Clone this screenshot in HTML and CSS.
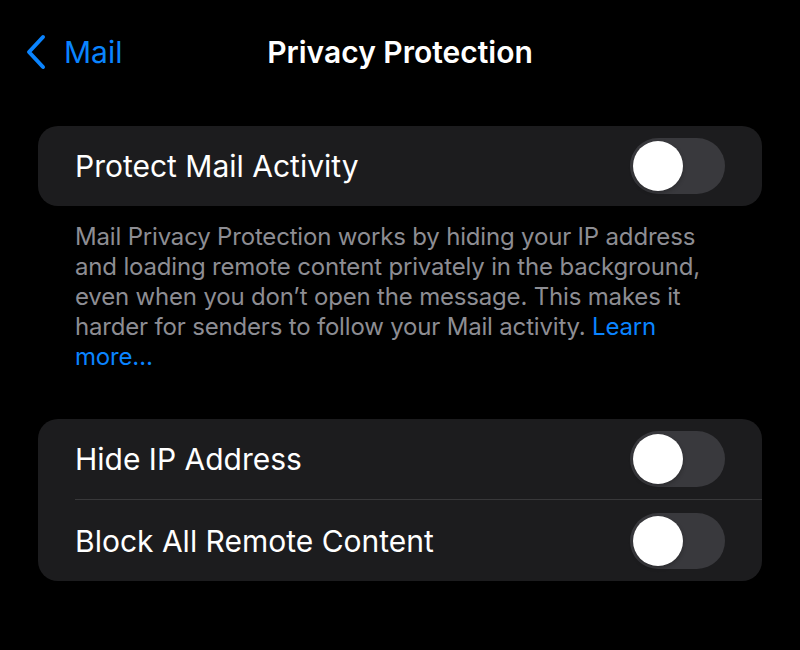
FILE: index.html
```html
<!DOCTYPE html>
<html lang="en">
<head>
	<meta charset="UTF-8">
	<meta name="viewport" content="width=device-width, initial-scale=1.0">
	<title>Privacy Protection</title>
	<link rel="stylesheet" href="styles.css">
</head>
<body>
	<div class="navbar">
		<a class="back" href="#">
			<svg class="chevron" width="22" height="36" viewBox="0 0 22 36">
				<path d="M18 3 L4 18 L18 33" fill="none" stroke="#0a84ff" stroke-width="4" stroke-linecap="round" stroke-linejoin="round"/>
			</svg>
			<span>Mail</span>
		</a>
		<div class="title">Privacy Protection</div>
	</div>

	<div class="group">
		<div class="row">
			<span class="label">Protect Mail Activity</span>
			<span class="toggle"><span class="knob"></span></span>
		</div>
	</div>
	<p class="footer">Mail Privacy Protection works by hiding your IP address and loading remote content privately in the background, even when you don’t open the message. This makes it harder for senders to follow your Mail activity. <a href="#">Learn more…</a></p>

	<div class="group">
		<div class="row">
			<span class="label">Hide IP Address</span>
			<span class="toggle"><span class="knob"></span></span>
		</div>
		<div class="row">
			<span class="label">Block All Remote Content</span>
			<span class="toggle"><span class="knob"></span></span>
		</div>
	</div>
</body>
</html>
```

FILE: styles.css
```css
body {
	margin: 0;
	background-color: #000;
	color: #fff;
	font-family: Inter, "Noto Sans", sans-serif;
	padding: 0 38px;
}
.navbar {
	position: relative;
	height: 126px;
	display: flex;
	justify-content: center;
	padding-top: 34px;
	box-sizing: border-box;
}
.back {
	position: absolute;
	left: -13px;
	top: 34px;
	display: flex;
	align-items: center;
	gap: 17px;
	color: #0a84ff;
	text-decoration: none;
	font-size: 30px;
	line-height: 36px;
}
.title {
	font-size: 30px;
	line-height: 36px;
	font-weight: 600;
}
.group {
	background-color: #1c1c1e;
	border-radius: 20px;
	padding-left: 37px;
}
.row {
	height: 80px;
	display: flex;
	align-items: center;
	justify-content: space-between;
	padding-right: 37px;
}
.row + .row {
	border-top: 1px solid #38383a;
	height: 81px;
}
.label {
	font-size: 30px;
}
.toggle {
	width: 95px;
	height: 56px;
	border-radius: 28px;
	background-color: #39393d;
	display: flex;
	align-items: center;
	padding: 3px;
	box-sizing: border-box;
}
.knob {
	width: 50px;
	height: 50px;
	border-radius: 50%;
	background-color: #fff;
	box-shadow: 0 2px 4px rgba(0, 0, 0, 0.25);
}
.footer {
	margin: 16px 37px 47px;
	color: #8d8d93;
	font-size: 24px;
	line-height: 30px;
	letter-spacing: -0.18px;
}
.footer a {
	color: #0a84ff;
	text-decoration: none;
}
```
